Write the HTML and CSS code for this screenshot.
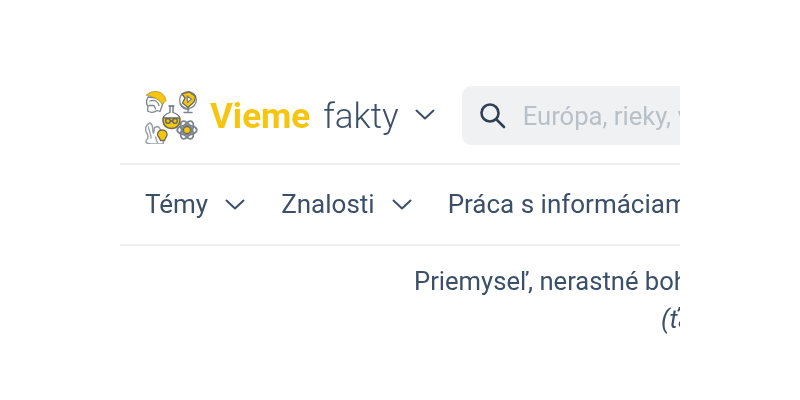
FILE: index.html
```html
<!DOCTYPE html>
<html lang="sk">
<head>
<meta charset="utf-8">
<title>Vieme fakty</title>
<link rel="stylesheet" href="styles.css">
</head>
<body>
<div class="page">
  <header class="top">
    <svg class="logo" width="54" height="54" viewBox="0 0 54 54" fill="none" stroke="#7b848f" stroke-width="1.300" stroke-linejoin="round" stroke-linecap="round">
      <!-- helmet -->
      <path d="M3 7C1 11 1 14 3 16L2.500 21C6 23 10 22 12 20.500L15 21.500L18 13L12 8Z" fill="#fff"/>
      <path d="M5 11C9 9.500 13 11 14 15.500M4 15.500H9L10.500 19"/>
      <path d="M1.500 5C7 -0.500 19 -0.500 21 10.500L17 14.500C15.500 10 9 7 1.500 5Z" fill="#f5c510" stroke="#a8923a" stroke-width="0.800"/>
      <!-- globe -->
      <circle cx="43" cy="10" r="8.400" fill="#fff"/>
      <path d="M37 4L44 1.800L50.500 6.500L49 12L43 17.500L37.500 13L40 8Z" fill="#f5c510" stroke="#6f6c50"/>
      <path d="M42 6L46.500 9L42.500 12.500Z" fill="#fff"/>
      <path d="M35 14C37 18 40 19.500 44 19.500M43 19.500V22M39 22.500H47"/>
      <!-- flask -->
      <path d="M24 16H29M25 16.500V22.500C20 24 17.500 27 18 31C18.500 36 22 38.500 26.500 38.500C31 38.500 35 36 35 31C35.500 27 33 24 28 22.500V16.500" fill="#fff" stroke="#66707c"/>
      <path d="M18.300 28H34.700C35.800 35 31 38.500 26.500 38.500C22 38.500 17.200 35 18.300 28Z" fill="#f5c510" stroke="#6f6c50"/>
      <circle cx="23" cy="31" r="2.300" stroke="#5a6068"/><circle cx="30" cy="31" r="2.300" stroke="#5a6068"/>
      <path d="M25.300 31H27.700" stroke="#5a6068"/>
      <!-- squirrel -->
      <path d="M5 33C1 34 -0.500 39 1.500 42.500C3.500 45.500 3 49 1 51C0.500 53 3 54 6 54H18L19 49L14.500 43C16 41 15.500 38 13 36.500L9.500 37.500C9.500 40 9 41.500 8.500 43C6.500 40 9.500 35.500 5 33Z" fill="#fff" stroke="#98a0a9" stroke-width="1.500"/>
      <path d="M3.500 37C3.500 40 6 43 6 48M10.500 47L12.500 53" stroke="#98a0a9"/>
      <path d="M12.500 44.500C12.500 41.500 15 40 17.500 40C20.500 40 22.500 42.500 22 45C21.500 47 20 48.500 19.500 50.500H15.500C15 48 13 47 12.500 44.500Z" fill="#f5c510" stroke="#6f6c50"/>
      <!-- atom -->
      <ellipse cx="42" cy="40" rx="9.800" ry="4.800" stroke-width="1.800"/>
      <ellipse cx="42" cy="40" rx="9.800" ry="4.800" stroke-width="1.800" transform="rotate(60 42 40)"/>
      <ellipse cx="42" cy="40" rx="9.800" ry="4.800" stroke-width="1.800" transform="rotate(120 42 40)"/>
      <circle cx="42" cy="40" r="3.500" fill="#f5c510" stroke="#6f6c50"/>
    </svg>
    <span class="brand-strong">Vieme</span>
    <span class="brand-light">fakty</span>
    <svg class="chev chev-brand" width="20" height="12" viewBox="0 0 20 12"><path d="M1.5 1.5L10 9.5L18.5 1.5"/></svg>
    <div class="search">
      <svg class="glass" width="28" height="28" viewBox="0 0 28 28"><circle cx="12" cy="12" r="8.500"/><path d="M18.500 18.500L26 26"/></svg>
      <span class="placeholder">Európa, rieky, vrchy</span>
    </div>
  </header>
  <nav class="nav">
    <span class="nav-item">Témy</span>
    <svg class="chev" width="20" height="12" viewBox="0 0 20 12"><path d="M1.5 1.5L10 9.5L18.5 1.5"/></svg>
    <span class="nav-item nav-next">Znalosti</span>
    <svg class="chev" width="20" height="12" viewBox="0 0 20 12"><path d="M1.5 1.5L10 9.5L18.5 1.5"/></svg>
    <span class="nav-item nav-next">Práca s informáciami</span>
  </nav>
  <div class="crumb">
    <p class="crumb-title">Priemyseľ, nerastné bohatstvo</p>
    <p class="crumb-sub">(ťažba)</p>
  </div>
</div>
</body>
</html>
```
FILE: styles.css
```css
* { box-sizing: border-box; }
html, body { margin: 0; padding: 0; background: #fff; }
body { font-family: Roboto, "Liberation Sans", sans-serif; color: #3b5068; }
.page { width: 560px; height: 400px; margin: 0 auto; overflow: hidden; padding-top: 86px; filter: blur(0.35px); }
.top { display: flex; align-items: center; height: 79px; padding: 0 0 19px 25px; border-bottom: 2px solid #eceef0; white-space: nowrap; }
.logo { flex: none; margin: 3px 11px 0 0; }
.brand-strong { font-size: 35px; font-weight: 700; color: #f5c510; margin: 2px 13px 0 0; }
.brand-light { font-size: 35px; font-weight: 300; color: #3b5068; margin: 2px 16px 0 0; }
.chev { flex: none; fill: none; stroke: #3b5068; stroke-width: 2; stroke-linecap: round; stroke-linejoin: round; }
.chev-brand { margin-right: 27px; }
.search { flex: none; display: flex; align-items: center; width: 400px; height: 59px; padding-left: 16px; background: #eff1f3; border-radius: 9px; }
.glass { flex: none; fill: none; stroke: #2f4054; stroke-width: 2.6; stroke-linecap: round; margin-right: 17px; }
.placeholder { font-size: 25.6px; color: #b8c0c8; margin-top: 2px; }
.nav { display: flex; align-items: center; height: 81px; padding-left: 25px; border-bottom: 2px solid #eceef0; white-space: nowrap; }
.nav-item { font-size: 26px; color: #3b5068; margin: 0 17px 2px 0; }
.nav-next { margin-left: 36px; }
.crumb { padding: 16px 0 0 294px; white-space: nowrap; color: #3b5068; font-size: 25.6px; }
.crumb p { margin: 0; }
.crumb-title { line-height: 38px; margin-bottom: 2px; }
.crumb-sub { line-height: 38px; font-style: italic; padding-left: 247px; }
```
